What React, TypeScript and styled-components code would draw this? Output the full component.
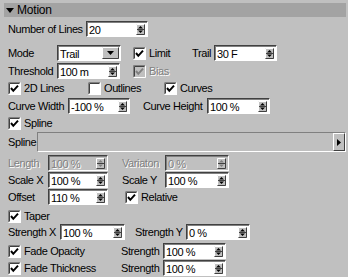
import styled, { createGlobalStyle } from "styled-components";

const GlobalStyle = createGlobalStyle`
  body {
    margin: 0;
    background: #c0c0c0;
  }
`;

const Panel = styled.div`
  width: 348px;
  height: 277px;
  overflow: hidden;
  background: #c0c0c0;
  font-family: "Liberation Sans", Arial, sans-serif;
  font-size: 11px;
  letter-spacing: -0.4px;
  color: #000;
`;

const Header = styled.div`
  display: flex;
  align-items: center;
  gap: 3px;
  height: 14px;
  margin: 3px 2px 0 4px;
  padding-left: 2px;
  background: #a3a3a3;
  font-size: 12px;
  letter-spacing: -0.2px;
`;

const Row = styled.div<{ $mt: number; $h?: number }>`
  display: flex;
  align-items: center;
  height: ${({ $h }) => $h ?? 16}px;
  margin-top: ${({ $mt }) => $mt}px;
  padding: 0 2px 0 8px;
`;

const Label = styled.span<{ $w: number; $ml?: number; $off?: boolean }>`
  flex: none;
  width: ${({ $w }) => $w}px;
  margin-left: ${({ $ml }) => $ml ?? 0}px;
  white-space: nowrap;
  color: ${({ $off }) => ($off ? "#808080" : "#000")};
  text-shadow: ${({ $off }) => ($off ? "1px 1px 0 #fff" : "none")};
`;

const Field = styled.div<{ $w: number; $off?: boolean }>`
  flex: none;
  display: flex;
  align-items: center;
  box-sizing: border-box;
  width: ${({ $w }) => $w}px;
  height: 16px;
  padding: 0 2px 0 2px;
  border: 1px solid;
  border-color: #404040 #fff #fff #404040;
  box-shadow: inset 1px 1px 0 #808080;
  background: ${({ $off }) => ($off ? "#c0c0c0" : "#fff")};
  color: ${({ $off }) => ($off ? "#808080" : "#000")};
  text-shadow: ${({ $off }) => ($off ? "1px 1px 0 #fff" : "none")};
`;

const Value = styled.span`
  flex: 1;
  padding-top: 1px;
  white-space: nowrap;
`;

const Select = styled(Field)`
  padding-right: 1px;
`;

const Gap = styled.div<{ $w: number }>`
  flex: none;
  width: ${({ $w }) => $w}px;
`;

const CheckWrap = styled.label<{ $w?: number; $ml?: number; $off?: boolean }>`
  flex: none;
  display: flex;
  align-items: center;
  gap: 3px;
  width: ${({ $w }) => ($w ? `${$w}px` : "auto")};
  margin-left: ${({ $ml }) => $ml ?? 0}px;
  white-space: nowrap;
  color: ${({ $off }) => ($off ? "#808080" : "#000")};
  text-shadow: ${({ $off }) => ($off ? "1px 1px 0 #fff" : "none")};
`;

const SplineField = styled.div`
  flex: 1;
  display: flex;
  justify-content: flex-end;
  align-items: center;
  box-sizing: border-box;
  height: 20px;
  border: 1px solid;
  border-color: #808080 #fff #fff #808080;
  background: #c0c0c0;
`;

const ArrowButton = styled.div`
  display: flex;
  align-items: center;
  justify-content: center;
  box-sizing: border-box;
  width: 12px;
  height: 18px;
  border: 1px solid;
  border-color: #fff #404040 #404040 #fff;
  background: #c0c0c0;
`;

const Spinner = ({ off }: { off?: boolean }) => {
  const c = off ? "#808080" : "#000";
  return (
    <svg width="9" height="11" viewBox="0 0 9 11" style={{ flex: "none" }}>
      <rect x="0" y="0" width="9" height="11" fill="#c0c0c0" />
      <path d="M0.5 10.5V0.5H8.5" stroke="#fff" fill="none" />
      <path d="M0.5 10.5H8.5V0.5" stroke="#404040" fill="none" />
      <path d="M1 5.5H8" stroke="#404040" />
      <polygon points="4.5,2 2,4.5 7,4.5" fill={c} />
      <polygon points="2,6.5 7,6.5 4.5,9" fill={c} />
    </svg>
  );
};

const DropArrow = () => (
  <svg width="17" height="12" viewBox="0 0 17 12" style={{ flex: "none" }}>
    <rect x="0" y="0" width="17" height="12" fill="#c0c0c0" />
    <path d="M0.5 11.5V0.5H16.5" stroke="#fff" fill="none" />
    <path d="M0.5 11.5H16.5V0.5" stroke="#404040" fill="none" />
    <polygon points="5,4 12,4 8.5,8" fill="#000" />
  </svg>
);

const CheckBox = ({ on, off }: { on: boolean; off?: boolean }) => (
  <svg width="13" height="13" viewBox="0 0 13 13" style={{ flex: "none" }}>
    <rect x="0" y="0" width="13" height="13" fill={off ? "#c0c0c0" : "#fff"} />
    <path d="M0.5 12.5V0.5H12.5" stroke="#808080" fill="none" />
    <path d="M1.5 11.5V1.5H11.5" stroke="#404040" fill="none" />
    <path d="M0.5 12.5H12.5V0.5" stroke="#fff" fill="none" />
    {on && (
      <polyline
        points="3,6 5.3,8.8 10,3.6"
        fill="none"
        stroke={off ? "#808080" : "#000"}
        strokeWidth="2"
      />
    )}
  </svg>
);

const Num = ({ w, value, off }: { w: number; value: string; off?: boolean }) => (
  <Field $w={w} $off={off}>
    <Value>{value}</Value>
    <Spinner off={off} />
  </Field>
);

const Check = ({
  text,
  on = true,
  off,
  w,
  ml,
}: {
  text: string;
  on?: boolean;
  off?: boolean;
  w?: number;
  ml?: number;
}) => (
  <CheckWrap $w={w} $ml={ml} $off={off}>
    <CheckBox on={on} off={off} />
    {text}
  </CheckWrap>
);

export default function App() {
  return (
    <>
      <GlobalStyle />
      <Panel>
        <Header>
          <svg width="8" height="5" viewBox="0 0 8 5">
            <polygon points="0,0 8,0 4,5" fill="#000" />
          </svg>
          Motion
        </Header>

        <Row $mt={4}>
          <Label $w={78}>Number of Lines</Label>
          <Num w={62} value="20" />
        </Row>

        <Row $mt={8}>
          <Label $w={49}>Mode</Label>
          <Select $w={64}>
            <Value>Trail</Value>
            <DropArrow />
          </Select>
          <Gap $w={12} />
          <Check text="Limit" w={59} />
          <Label $w={22}>Trail</Label>
          <Num w={63} value="30 F" />
        </Row>

        <Row $mt={2}>
          <Label $w={49}>Threshold</Label>
          <Num w={63} value="100 m" />
          <Check text="Bias" off ml={13} />
        </Row>

        <Row $mt={1}>
          <Check text="2D Lines" w={80} />
          <Check text="Outlines" on={false} w={76} />
          <Check text="Curves" />
        </Row>

        <Row $mt={2}>
          <Label $w={60}>Curve Width</Label>
          <Num w={62} value="-100 %" />
          <Label $w={64} $ml={13}>
            Curve Height
          </Label>
          <Num w={63} value="100 %" />
        </Row>

        <Row $mt={1}>
          <Check text="Spline" />
        </Row>

        <Row $mt={1} $h={20}>
          <Label $w={29}>Spline</Label>
          <SplineField>
            <ArrowButton>
              <svg width="4" height="7" viewBox="0 0 4 7">
                <polygon points="0,0 4,3.5 0,7" fill="#000" />
              </svg>
            </ArrowButton>
          </SplineField>
        </Row>

        <Row $mt={3}>
          <Label $w={40} $off>
            Length
          </Label>
          <Num w={60} value="100 %" off />
          <Label $w={43} $ml={14} $off>
            Variaton
          </Label>
          <Num w={64} value="0 %" off />
        </Row>

        <Row $mt={1}>
          <Label $w={40}>Scale X</Label>
          <Num w={60} value="100 %" />
          <Label $w={43} $ml={14}>
            Scale Y
          </Label>
          <Num w={64} value="100 %" />
        </Row>

        <Row $mt={1}>
          <Label $w={40}>Offset</Label>
          <Num w={60} value="110 %" />
          <Check text="Relative" ml={17} />
        </Row>

        <Row $mt={3}>
          <Check text="Taper" />
        </Row>

        <Row $mt={0}>
          <Label $w={52}>Strength X</Label>
          <Num w={65} value="100 %" />
          <Label $w={51} $ml={10}>
            Strength Y
          </Label>
          <Num w={64} value="0 %" />
        </Row>

        <Row $mt={3}>
          <Check text="Fade Opacity" w={113} />
          <Label $w={42}>Strength</Label>
          <Num w={63} value="100 %" />
        </Row>

        <Row $mt={1}>
          <Check text="Fade Thickness" w={113} />
          <Label $w={42}>Strength</Label>
          <Num w={63} value="100 %" />
        </Row>
      </Panel>
    </>
  );
}
